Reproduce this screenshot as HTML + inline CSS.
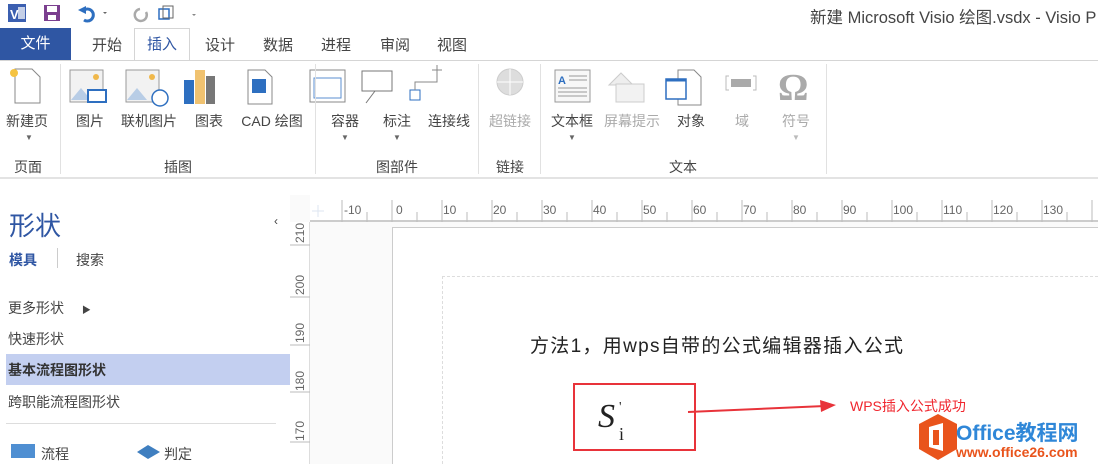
<!DOCTYPE html>
<html><head><meta charset="utf-8"><style>
*{margin:0;padding:0;box-sizing:border-box}
body{width:1098px;height:464px;overflow:hidden;background:#fff;font-family:"Liberation Sans","Noto Sans CJK SC",sans-serif;position:relative;color:#444}
.a{position:absolute;white-space:nowrap}
.c{transform:translateX(-50%);font-size:14px;color:#444}
.g{color:#aaa}
.sep{position:absolute;top:64px;width:1px;height:110px;background:#e1e1e1}
.rl{position:absolute;font-size:12px;color:#666}
</style></head><body>
<svg class="a" style="left:6px;top:2px" width="200" height="24">
<rect x="2" y="2" width="18" height="18" fill="#3b5fb0"/><text x="4" y="17" font-size="13" fill="#fff" font-family="Liberation Sans" font-weight="bold">V</text><rect x="12" y="5" width="7" height="12" fill="#fff" opacity=".7"/>
<rect x="38" y="3" width="16" height="16" fill="#7b3f8f"/><rect x="41" y="4" width="10" height="6" fill="#fff"/><rect x="42" y="13" width="8" height="5" fill="#fff"/>
<path d="M78 8 a6 6 0 1 1 0 10" stroke="#2e6fc0" stroke-width="3" fill="none"/><path d="M72 8 l8 -4 v8z" fill="#2e6fc0"/><path d="M97 10 l2 2 l2 -2z" fill="#666"/>
<path d="M134 7 a6 6 0 1 0 6 3" stroke="#aaa" stroke-width="2.5" fill="none"/>
<rect x="153" y="7" width="10" height="10" fill="none" stroke="#2e6fc0" stroke-width="1.5"/><rect x="157" y="4" width="10" height="12" fill="none" stroke="#666"/>
<path d="M186 12 l2 2 l2 -2z" fill="#888"/></svg>
<div class="a" style="left:810px;top:4px;font-size:16.5px;color:#444">新建 Microsoft Visio 绘图.vsdx - Visio P</div>
<div class="a" style="left:0;top:28px;width:71px;height:32px;background:#2f56a3;color:#fff;font-size:15px;text-align:center;line-height:32px">文件</div>
<div class="a" style="left:134px;top:28px;width:56px;height:33px;border:1px solid #d5d5d5;border-bottom:none;background:#fff;color:#2f56a3;font-size:15px;text-align:center;line-height:32px">插入</div>
<div class="a" style="left:0;top:60px;width:1098px;height:1px;background:#d5d5d5"></div>
<div class="a" style="left:92px;top:34px;font-size:15px">开始</div>
<div class="a" style="left:205px;top:34px;font-size:15px">设计</div>
<div class="a" style="left:263px;top:34px;font-size:15px">数据</div>
<div class="a" style="left:321px;top:34px;font-size:15px">进程</div>
<div class="a" style="left:380px;top:34px;font-size:15px">审阅</div>
<div class="a" style="left:437px;top:34px;font-size:15px">视图</div>
<svg class="a" style="left:0;top:62px" width="840" height="50">
<path d="M15 7 h17 l8 8 v26 h-25z" fill="#fff" stroke="#888"/><circle cx="14" cy="11" r="4" fill="#f5c342"/>
<rect x="70" y="8" width="33" height="32" fill="#f2f2f2" stroke="#999"/><path d="M71 38 l10 -12 l10 12z" fill="#b8cde6"/><circle cx="96" cy="15" r="3" fill="#f0b84b"/><rect x="88" y="28" width="18" height="12" fill="#fff" stroke="#2e6fc0" stroke-width="2"/>
<rect x="126" y="8" width="33" height="32" fill="#f2f2f2" stroke="#999"/><path d="M127 38 l10 -12 l10 12z" fill="#b8cde6"/><circle cx="152" cy="15" r="3" fill="#f0b84b"/><circle cx="160" cy="36" r="8" fill="#fff" stroke="#2e6fc0" stroke-width="1.5"/>
<rect x="184" y="18" width="10" height="24" fill="#2e6fc0"/><rect x="195" y="8" width="10" height="34" fill="#f0c270"/><rect x="206" y="14" width="9" height="28" fill="#777"/>
<path d="M248 8 h17 l7 7 v27 h-24z" fill="#fff" stroke="#888"/><rect x="252" y="17" width="14" height="14" fill="#2e6fc0"/>
<rect x="310" y="8" width="35" height="32" fill="#fff" stroke="#888"/><rect x="314" y="16" width="27" height="20" fill="#fff" stroke="#5b8fd0"/>
<rect x="362" y="9" width="30" height="20" fill="#fff" stroke="#777"/><path d="M375 29 l-9 12" stroke="#777"/>
<rect x="410" y="28" width="10" height="10" fill="#fff" stroke="#2e6fc0"/><path d="M415 28 v-8 h22 v-12 M437 3 v10 M432 8 h10" stroke="#888" fill="none"/>
<circle cx="510" cy="20" r="13" fill="#ddd" stroke="#ccc"/><path d="M497 20 h26 M510 7 v26" stroke="#fff"/>
<rect x="555" y="8" width="35" height="32" fill="#f7f7f7" stroke="#999"/><text x="558" y="22" font-size="11" fill="#2e6fc0" font-weight="bold">A</text><path d="M569 14 h18 M569 18 h18 M558 26 h29 M558 30 h29 M558 34 h29" stroke="#999"/>
<path d="M609 23 l12 -12 l12 12z" fill="#eee" stroke="#ccc"/><rect x="616" y="22" width="28" height="18" fill="#f2f2f2" stroke="#ccc"/>
<path d="M678 8 h16 l7 7 v28 h-23z" fill="#fff" stroke="#888"/><rect x="666" y="17" width="20" height="20" fill="#fff" stroke="#2e6fc0" stroke-width="1.5"/><path d="M666 18 h20" stroke="#2e6fc0" stroke-width="3"/>
<path d="M729 14 h-3 v14 h3 M753 14 h3 v14 h-3" stroke="#bbb" fill="none"/><rect x="731" y="17" width="20" height="8" fill="#aaa"/>
<text x="778" y="38" font-size="38" fill="#aaa" font-family="Liberation Serif" font-weight="bold">Ω</text>
</svg>
<div class="sep" style="left:60px"></div><div class="sep" style="left:315px"></div><div class="sep" style="left:478px"></div><div class="sep" style="left:540px"></div><div class="sep" style="left:826px"></div>
<div class="a c" style="left:27px;top:111px">新建页</div>
<div class="a c" style="left:90px;top:111px">图片</div>
<div class="a c" style="left:149px;top:111px">联机图片</div>
<div class="a c" style="left:209px;top:111px">图表</div>
<div class="a c" style="left:272px;top:111px">CAD 绘图</div>
<div class="a c" style="left:345px;top:111px">容器</div>
<div class="a c" style="left:397px;top:111px">标注</div>
<div class="a c" style="left:449px;top:111px">连接线</div>
<div class="a c g" style="left:510px;top:111px">超链接</div>
<div class="a c" style="left:572px;top:111px">文本框</div>
<div class="a c g" style="left:632px;top:111px">屏幕提示</div>
<div class="a c" style="left:691px;top:111px">对象</div>
<div class="a c g" style="left:742px;top:111px">域</div>
<div class="a c g" style="left:796px;top:111px">符号</div>
<div class="a c" style="left:29px;top:133px;font-size:8px;color:#666">▼</div>
<div class="a c" style="left:345px;top:133px;font-size:8px;color:#666">▼</div>
<div class="a c" style="left:397px;top:133px;font-size:8px;color:#666">▼</div>
<div class="a c" style="left:572px;top:133px;font-size:8px;color:#666">▼</div>
<div class="a c" style="left:796px;top:133px;font-size:8px;color:#bbb">▼</div>
<div class="a c" style="left:28px;top:157px">页面</div>
<div class="a c" style="left:178px;top:157px">插图</div>
<div class="a c" style="left:397px;top:157px">图部件</div>
<div class="a c" style="left:510px;top:157px">链接</div>
<div class="a c" style="left:683px;top:157px">文本</div>
<div class="a" style="left:0;top:177px;width:1098px;height:2px;background:#e3e3e3"></div>
<div class="a" style="left:9px;top:206px;font-size:26px;color:#2f56a3">形状</div>
<div class="a" style="left:274px;top:214px;font-size:12px;color:#444">‹</div>
<div class="a" style="left:9px;top:250px;font-size:14px;color:#2f56a3;font-weight:bold">模具</div>
<div class="a" style="left:57px;top:248px;width:1px;height:20px;background:#ccc"></div>
<div class="a" style="left:76px;top:250px;font-size:14px">搜索</div>
<div class="a" style="left:8px;top:298px;font-size:14px">更多形状 <span style="font-size:9px;margin-left:14px">▶</span></div>
<div class="a" style="left:8px;top:329px;font-size:14px">快速形状</div>
<div class="a" style="left:6px;top:354px;width:284px;height:31px;background:#c3cff0"></div>
<div class="a" style="left:8px;top:360px;font-size:14px;color:#333;font-weight:bold">基本流程图形状</div>
<div class="a" style="left:8px;top:392px;font-size:14px">跨职能流程图形状</div>
<div class="a" style="left:6px;top:423px;width:270px;height:1px;background:#ddd"></div>
<div class="a" style="left:11px;top:444px;width:24px;height:14px;background:#4f8fd2"></div>
<div class="a" style="left:41px;top:444px;font-size:14px">流程</div>
<svg class="a" style="left:136px;top:444px" width="30" height="16"><path d="M1 8 L12 1 L24 8 L12 15z" fill="#3f7fc0"/></svg>
<div class="a" style="left:164px;top:444px;font-size:14px">判定</div>
<div class="a" style="left:290px;top:195px;width:808px;height:269px;background:#fafafa"></div>
<div class="a" style="left:310px;top:195px;width:788px;height:27px;background:#fff;border-bottom:2px solid #ccc"></div>
<div class="a" style="left:290px;top:222px;width:20px;height:242px;background:#fff;border-right:1px solid #ddd"></div>
<div class="a" style="left:392px;top:227px;width:706px;height:237px;background:#fff;border-left:1px solid #ccc;border-top:1px solid #ccc"></div>
<div class="a" style="left:442px;top:276px;width:656px;height:188px;border-left:1px dashed #ddd;border-top:1px dashed #ddd"></div>
<div class="rl" style="left:344px;top:203px">-10</div><div class="rl" style="left:396px;top:203px">0</div>
<div class="rl" style="left:443px;top:203px">10</div><div class="rl" style="left:493px;top:203px">20</div><div class="rl" style="left:543px;top:203px">30</div><div class="rl" style="left:593px;top:203px">40</div><div class="rl" style="left:643px;top:203px">50</div><div class="rl" style="left:693px;top:203px">60</div><div class="rl" style="left:743px;top:203px">70</div><div class="rl" style="left:793px;top:203px">80</div><div class="rl" style="left:843px;top:203px">90</div><div class="rl" style="left:893px;top:203px">100</div><div class="rl" style="left:943px;top:203px">110</div><div class="rl" style="left:993px;top:203px">120</div><div class="rl" style="left:1043px;top:203px">130</div>
<svg class="a" style="left:290px;top:195px" width="808" height="269">
<g stroke="#bbb">
<path d="M52 5v22M102 5v22M152 5v22M202 5v22M252 5v22M302 5v22M352 5v22M402 5v22M452 5v22M502 5v22M552 5v22M602 5v22M652 5v22M702 5v22M752 5v22M802 5v22"/>
<path d="M77 17v10M127 17v10M177 17v10M227 17v10M277 17v10M327 17v10M377 17v10M427 17v10M477 17v10M527 17v10M577 17v10M627 17v10M677 17v10M727 17v10M777 17v10"/>
<path d="M0 50h20M0 102h20M0 150h20M0 197h20M0 247h20"/></g>
<path d="M22 16h12M28 10v12" stroke="#dde6f0"/>
<g font-size="12" fill="#666" font-family="Liberation Sans">
<text transform="translate(14,48) rotate(-90)">210</text><text transform="translate(14,100) rotate(-90)">200</text><text transform="translate(14,148) rotate(-90)">190</text><text transform="translate(14,196) rotate(-90)">180</text><text transform="translate(14,246) rotate(-90)">170</text></g>
</svg>
<div class="a" style="left:530px;top:331px;font-size:19px;letter-spacing:1.3px;color:#222">方法1，用wps自带的公式编辑器插入公式</div>
<div class="a" style="left:573px;top:383px;width:123px;height:68px;border:2px solid #e8333a"></div>
<div class="a" style="left:598px;top:398px;font-family:'Liberation Serif',serif;font-size:34px;font-style:italic;color:#222">S</div>
<div class="a" style="left:619px;top:400px;font-family:'Liberation Serif',serif;font-size:14px;color:#222">'</div>
<div class="a" style="left:619px;top:424px;font-family:'Liberation Serif',serif;font-size:18px;color:#222">i</div>
<svg class="a" style="left:680px;top:395px" width="170" height="25"><path d="M8 17 L145 11" stroke="#e8333a" stroke-width="2"/><path d="M140 5 L156 10 L141 17z" fill="#e8333a"/></svg>
<div class="a" style="left:850px;top:396px;font-size:14px;color:#f0262e">WPS插入公式成功</div>
<svg class="a" style="left:917px;top:413px" width="42" height="48"><path d="M21 1 L40 11 V36 L21 47 L2 36 V11z" fill="#e9541c"/><path d="M12 14 L26 10 V38 L12 34z" fill="#fff"/><rect x="16" y="17" width="6" height="15" fill="#e9541c"/></svg>
<div class="a" style="left:956px;top:417px;font-size:21px;font-weight:bold;color:#2f87d8">Office教程网</div>
<div class="a" style="left:956px;top:444px;font-size:14px;font-weight:bold;color:#e9541c">www.office26.com</div>
</body></html>
